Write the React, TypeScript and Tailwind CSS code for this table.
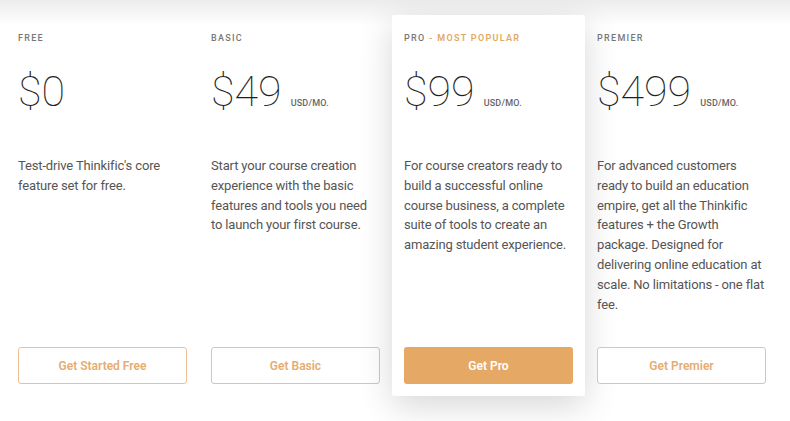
import React from "react";

type Plan = {
  name: string;
  tag?: string;
  price: string;
  monthly: boolean;
  description: string;
  cta: string;
  featured?: boolean;
};

const plans: Plan[] = [
  {
    name: "FREE",
    price: "$0",
    monthly: false,
    description: "Test-drive Thinkific's core feature set for free.",
    cta: "Get Started Free",
  },
  {
    name: "BASIC",
    price: "$49",
    monthly: true,
    description:
      "Start your course creation experience with the basic features and tools you need to launch your first course.",
    cta: "Get Basic",
  },
  {
    name: "PRO",
    tag: "MOST POPULAR",
    price: "$99",
    monthly: true,
    description:
      "For course creators ready to build a successful online course business, a complete suite of tools to create an amazing student experience.",
    cta: "Get Pro",
    featured: true,
  },
  {
    name: "PREMIER",
    price: "$499",
    monthly: true,
    description:
      "For advanced customers ready to build an education empire, get all the Thinkific features + the Growth package. Designed for delivering online education at scale. No limitations - one flat fee.",
    cta: "Get Premier",
  },
];

function PlanCard({ plan }: { plan: Plan }) {
  return (
    <div
      className={`flex h-[381px] w-[193px] flex-col px-[12px] pt-[16px] pb-[12px] ${
        plan.featured
          ? "rounded-[2px] bg-white shadow-[0_10px_34px_rgba(0,0,0,0.16)]"
          : ""
      }`}
    >
      <p className="text-[9px] font-medium leading-[14px] tracking-[1.3px] text-[#777]">
        {plan.name}
        {plan.tag && (
          <span className="font-semibold text-[#e3a862]"> - {plan.tag}</span>
        )}
      </p>
      <div className="mt-[25px] flex items-baseline">
        <span className="text-[43px] font-thin leading-[42px] text-[#1e1e1e]">
          {plan.price}
        </span>
        {plan.monthly && (
          <span className="ml-[9px] text-[9px] font-medium tracking-[0.2px] text-[#666]">
            USD/MO.
          </span>
        )}
      </div>
      <p className="mt-[44px] flex-1 text-[13px] leading-[19.8px] tracking-[-0.15px] text-[#555]">
        {plan.description}
      </p>
      <button
        className={`h-[37px] w-full rounded-[3px] text-[12px] font-semibold ${
          plan.featured
            ? "bg-[#e6a865] text-white"
            : "border border-solid border-[#eec096] bg-white text-[#e6ac70]"
        }`}
      >
        {plan.cta}
      </button>
    </div>
  );
}

export default function App() {
  return (
    <div
      className="h-[421px] w-[790px] overflow-hidden bg-[linear-gradient(to_bottom,#ececec,#ffffff_26px)]"
      style={{ fontFamily: "Roboto, 'Liberation Sans', sans-serif" }}
    >
      <div className="flex pt-[15px] pl-[6px]">
        {plans.map((plan) => (
          <PlanCard key={plan.name} plan={plan} />
        ))}
      </div>
    </div>
  );
}
